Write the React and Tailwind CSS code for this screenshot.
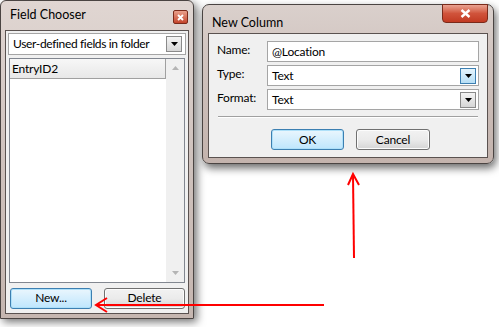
import React from "react";

const font = { fontFamily: 'Lato, "Noto Sans", sans-serif' };

function DropBtn({ blue }) {
  return (
    <div
      className={
        "w-[16px] h-[16px] border flex items-center justify-center " +
        (blue
          ? "border-[#3c7fb1] bg-gradient-to-b from-[#e5f4fc] to-[#b7dff5]"
          : "border-[#8a8a8a] bg-gradient-to-b from-[#f4f4f4] to-[#d6d6d6]")
      }
    >
      <svg width="7" height="4" viewBox="0 0 7 4">
        <polygon points="0,0 7,0 3.5,4" fill="#000" />
      </svg>
    </div>
  );
}

function Btn({ children, blue, w }) {
  return (
    <div
      className={
        "h-[21px] rounded-[3px] border flex items-center justify-center text-[12px] tracking-[-0.2px] text-black whitespace-nowrap " +
        w +
        " " +
        (blue
          ? "border-[#3c7fb1] bg-gradient-to-b from-[#eaf6fd] to-[#bee6fd] shadow-[inset_0_0_0_1px_#aee0f9]"
          : "border-[#707070] bg-gradient-to-b from-[#f2f2f2] via-[#ebebeb] to-[#d5d5d5] shadow-[inset_0_0_0_1px_#fcfcfc]")
      }
    >
      {children}
    </div>
  );
}

function FieldChooser() {
  return (
    <div className="absolute left-0 top-0 w-[194px] h-[319px] rounded-t-[6px] border border-[#4a4442] bg-gradient-to-b from-[#e0d6d2] via-[#cfc2bd] to-[#c5b6b0] shadow-[3px_3px_8px_rgba(0,0,0,0.55)] flex flex-col">
      <div className="h-[29px] flex items-start justify-between pl-[9px] pr-[5px] pt-[5px]">
        <span className="text-[12.5px] text-black leading-[18px] whitespace-nowrap">Field Chooser</span>
        <div className="mt-[4px] w-[15px] h-[14px] rounded-[2px] border border-[#7a2a1a] bg-gradient-to-b from-[#e8a08c] to-[#c4432a] flex items-center justify-center">
          <svg width="7" height="7" viewBox="0 0 7 7">
            <path d="M1 1 L6 6 M6 1 L1 6" stroke="#fff" strokeWidth="1.8" />
          </svg>
        </div>
      </div>
      <div className="flex-1 mx-[4px] mb-[4px] border border-[#5a5250] bg-[#f0f0f0] flex flex-col px-[2px] pt-[2px] pb-[2px]">
        <div className="h-[22px] border border-[#a5a5a5] bg-white flex items-center justify-between pl-[4px] pr-[3px]">
          <span className="text-[12px] tracking-[-0.35px] text-black whitespace-nowrap">User-defined fields in folder</span>
          <DropBtn />
        </div>
        <div className="mt-[3px] mx-[1px] flex-1 border border-[#828790] bg-white flex">
          <div className="flex-1 flex flex-col">
            <div className="h-[20px] border-b border-r border-[#a0a0a0] bg-gradient-to-b from-[#f7f7f7] to-[#e8e8e8] flex items-center pl-[2px] text-[12px] tracking-[-0.2px] text-black">
              EntryID2
            </div>
          </div>
          <div className="w-[18px] bg-[#f0f0f0] flex flex-col items-center justify-between py-[7px]">
            <svg width="7" height="4" viewBox="0 0 7 4">
              <polygon points="0,4 7,4 3.5,0" fill="#b4b4b4" />
            </svg>
            <svg width="7" height="4" viewBox="0 0 7 4">
              <polygon points="0,0 7,0 3.5,4" fill="#b4b4b4" />
            </svg>
          </div>
        </div>
        <div className="h-[28px] flex items-center justify-between pl-[2px] pr-[1px] pt-[2px]">
          <Btn blue w="w-[82px]">New...</Btn>
          <Btn w="w-[81px]">Delete</Btn>
        </div>
      </div>
    </div>
  );
}

function Row({ label, value, drop, blue }) {
  return (
    <div className="flex items-center h-[21px]">
      <span className="w-[51px] text-[12px] tracking-[-0.2px] text-black -mt-[4px] whitespace-nowrap">{label}</span>
      <div className="w-[216px] h-[21px] border border-[#a5a5a5] bg-white flex items-center justify-between pl-[4px] pr-[2px] text-[12px] tracking-[-0.2px] text-black">
        <span>{value}</span>
        {drop && <DropBtn blue={blue} />}
      </div>
    </div>
  );
}

function NewColumn() {
  return (
    <div className="absolute left-[202px] top-[4px] w-[292px] h-[160px] rounded-[7px] border border-[#4a4442] bg-gradient-to-b from-[#dad0cc] via-[#cdbfba] to-[#c3b3ad] shadow-[2px_4px_9px_rgba(0,0,0,0.6)] flex flex-col">
      <div className="relative h-[28px] pl-[9px] pt-[4px]">
        <span className="text-[12.5px] text-black leading-[18px] whitespace-nowrap">New Column</span>
        <div className="absolute right-[5px] -top-[1px] w-[46px] h-[19px] rounded-b-[4px] border border-[#7a2a1a] bg-gradient-to-b from-[#e9a291] via-[#d0533b] to-[#c23a22] flex items-center justify-center">
          <svg width="11" height="9" viewBox="0 0 11 9">
            <path d="M1.5 1 L9.5 8 M9.5 1 L1.5 8" stroke="#fff" strokeWidth="2.4" />
          </svg>
        </div>
      </div>
      <div className="flex-1 mx-[5px] mb-[5px] border border-[#5a5250] bg-[#f0f0f0] px-[8px] pt-[7px] flex flex-col">
        <div className="flex flex-col gap-[3px]">
          <Row label="Name:" value="@Location" />
          <Row label="Type:" value="Text" drop blue />
          <Row label="Format:" value="Text" drop />
        </div>
        <div className="mt-[6px] mx-[1px] h-[2px] border-t border-[#a0a0a0] border-b border-b-white" />
        <div className="mt-[11px] flex gap-[12px] pl-[54px]">
          <Btn blue w="w-[73px]">OK</Btn>
          <Btn w="w-[74px]">Cancel</Btn>
        </div>
      </div>
    </div>
  );
}

export default function App() {
  return (
    <div className="relative w-[499px] h-[327px] bg-white overflow-hidden" style={font}>
      <FieldChooser />
      <NewColumn />
      <svg className="absolute left-0 top-0 pointer-events-none" width="499" height="327">
        <line x1="353" y1="175" x2="354" y2="258" stroke="#ff0000" strokeWidth="2" />
        <polyline points="348,185 353,174 359,185" fill="none" stroke="#ff0000" strokeWidth="2" />
        <line x1="97" y1="305" x2="324" y2="305" stroke="#ff0000" strokeWidth="2" />
        <polyline points="107,298 96,305 107,312" fill="none" stroke="#ff0000" strokeWidth="2" />
      </svg>
    </div>
  );
}
